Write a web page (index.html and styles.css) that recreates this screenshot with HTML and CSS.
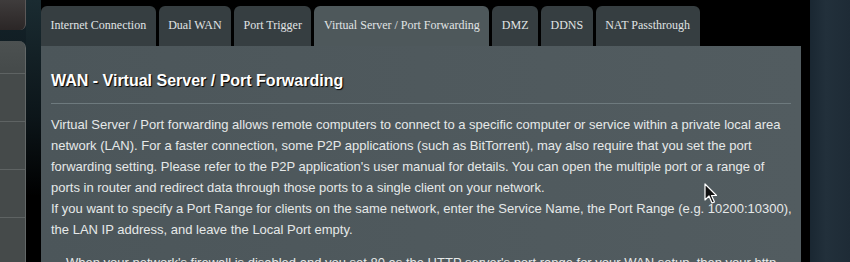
FILE: index.html
```html
<!DOCTYPE html>
<html lang="en">
<head>
    <meta charset="UTF-8">
    <meta name="viewport" content="width=device-width, initial-scale=1.0">
    <title>WAN - Virtual Server / Port Forwarding</title>
    <link rel="stylesheet" href="styles.css">
</head>
<body>
    <div class="sidebar">
        <div class="menu-top"></div>
        <div class="menu-list">
            <div class="menu-item first"></div>
            <div class="menu-item"></div>
            <div class="menu-item"></div>
            <div class="menu-item"></div>
            <div class="menu-item"></div>
        </div>
    </div>

    <div class="spacer"></div>

    <div class="main">
        <div class="tabs">
            <div class="tab">Internet Connection</div>
            <div class="tab">Dual WAN</div>
            <div class="tab">Port Trigger</div>
            <div class="tab active">Virtual Server / Port Forwarding</div>
            <div class="tab">DMZ</div>
            <div class="tab">DDNS</div>
            <div class="tab">NAT Passthrough</div>
        </div>

        <div class="panel">
            <h2 class="title">WAN - Virtual Server / Port Forwarding</h2>
            <div class="divider"></div>
            <p class="desc">
                Virtual Server / Port forwarding allows remote computers to connect to a specific computer or service within a private local area network (LAN). For a faster connection, some P2P applications (such as BitTorrent), may also require that you set the port forwarding setting. Please refer to the P2P application's user manual for details. You can open the multiple port or a range of ports in router and redirect data through those ports to a single client on your network.<br>
                If you want to specify a Port Range for clients on the same network, enter the Service Name, the Port Range (e.g. 10200:10300), the LAN IP address, and leave the Local Port empty.
            </p>
            <ul class="notes">
                <li>When your network's firewall is disabled and you set 80 as the HTTP server's port range for your WAN setup, then your http</li>
            </ul>
            <svg class="cursor" width="14" height="22" viewBox="0 0 14 22">
                <path d="M1 1 L1 17 L5 13 L8 20 L10.5 19 L7.5 12.5 L12.5 12.5 Z" fill="#111" stroke="#fff" stroke-width="1.2" stroke-linejoin="round"/>
            </svg>
        </div>
    </div>

    <div class="edge"></div>
    <div class="right-bg"></div>
</body>
</html>
```

FILE: styles.css
```css
html, body {
    margin: 0;
    height: 262px;
    overflow: hidden;
}

body {
    display: flex;
    background-color: #000;
    font-family: 'Liberation Sans', Arial, sans-serif;
    color: #e6e9e9;
}

.sidebar {
    width: 26px;
    flex-shrink: 0;
    background: linear-gradient(180deg, #14232a 0%, #0a1114 60%, #000 100%);
}

.menu-top {
    height: 30px;
    border-bottom-right-radius: 6px;
    background: linear-gradient(180deg, #3f3c3c 0%, #2b2626 100%);
    border-right: 1px solid #5b5858;
    box-sizing: border-box;
}

.menu-list {
    margin-top: 11px;
    border-top-right-radius: 7px;
    background: #454a4a;
    border-right: 1px solid #626767;
    box-sizing: border-box;
    height: 240px;
}

.menu-item {
    height: 48px;
    border-bottom: 1px solid #5e6363;
    box-sizing: border-box;
}

.menu-item.first {
    height: 33px;
    background: linear-gradient(180deg, #4c5151 0%, #454a4a 100%);
    border-top-right-radius: 7px;
}

.spacer {
    width: 15px;
    flex-shrink: 0;
    background: linear-gradient(180deg, #1a2b31 0%, #0c1519 45%, #000 75%);
}

.main {
    width: 760px;
    flex-shrink: 0;
    display: flex;
    flex-direction: column;
}

.tabs {
    display: flex;
    gap: 3px;
    padding-top: 6px;
    height: 40px;
}

.tab {
    height: 40px;
    box-sizing: border-box;
    padding: 0 9.5px 2px;
    display: flex;
    align-items: center;
    font-family: 'Liberation Serif', 'Times New Roman', serif;
    font-size: 12px;
    color: #e0e4e5;
    background: #363e41;
    border-radius: 6px 6px 0 0;
}

.tab.active {
    background: #4e585b;
}

.panel {
    flex: 1;
    position: relative;
    background: linear-gradient(90deg, #4c565a 0%, #525c60 100%);
    padding: 0 10px;
}

.title {
    margin: 26px 0 0;
    font-size: 16px;
    line-height: 18px;
    font-weight: bold;
    color: #fff;
    text-shadow: 1px 1px 1px #000;
}

.divider {
    margin-top: 13px;
    height: 1px;
    background: #6e7a7e;
}

.desc {
    margin: 10px -3px 0 0;
    font-size: 13px;
    line-height: 21px;
}

.notes {
    margin: 12px 0 0;
    padding-left: 15px;
    list-style: none;
    font-size: 13px;
    line-height: 21px;
    white-space: nowrap;
}

.cursor {
    position: absolute;
    left: 663px;
    top: 137px;
}

.edge {
    width: 9px;
    flex-shrink: 0;
    background: #000;
}

.right-bg {
    flex: 1;
    background: linear-gradient(90deg, #1a2732 0%, #22303b 40%, #1e2b36 100%);
}
```
